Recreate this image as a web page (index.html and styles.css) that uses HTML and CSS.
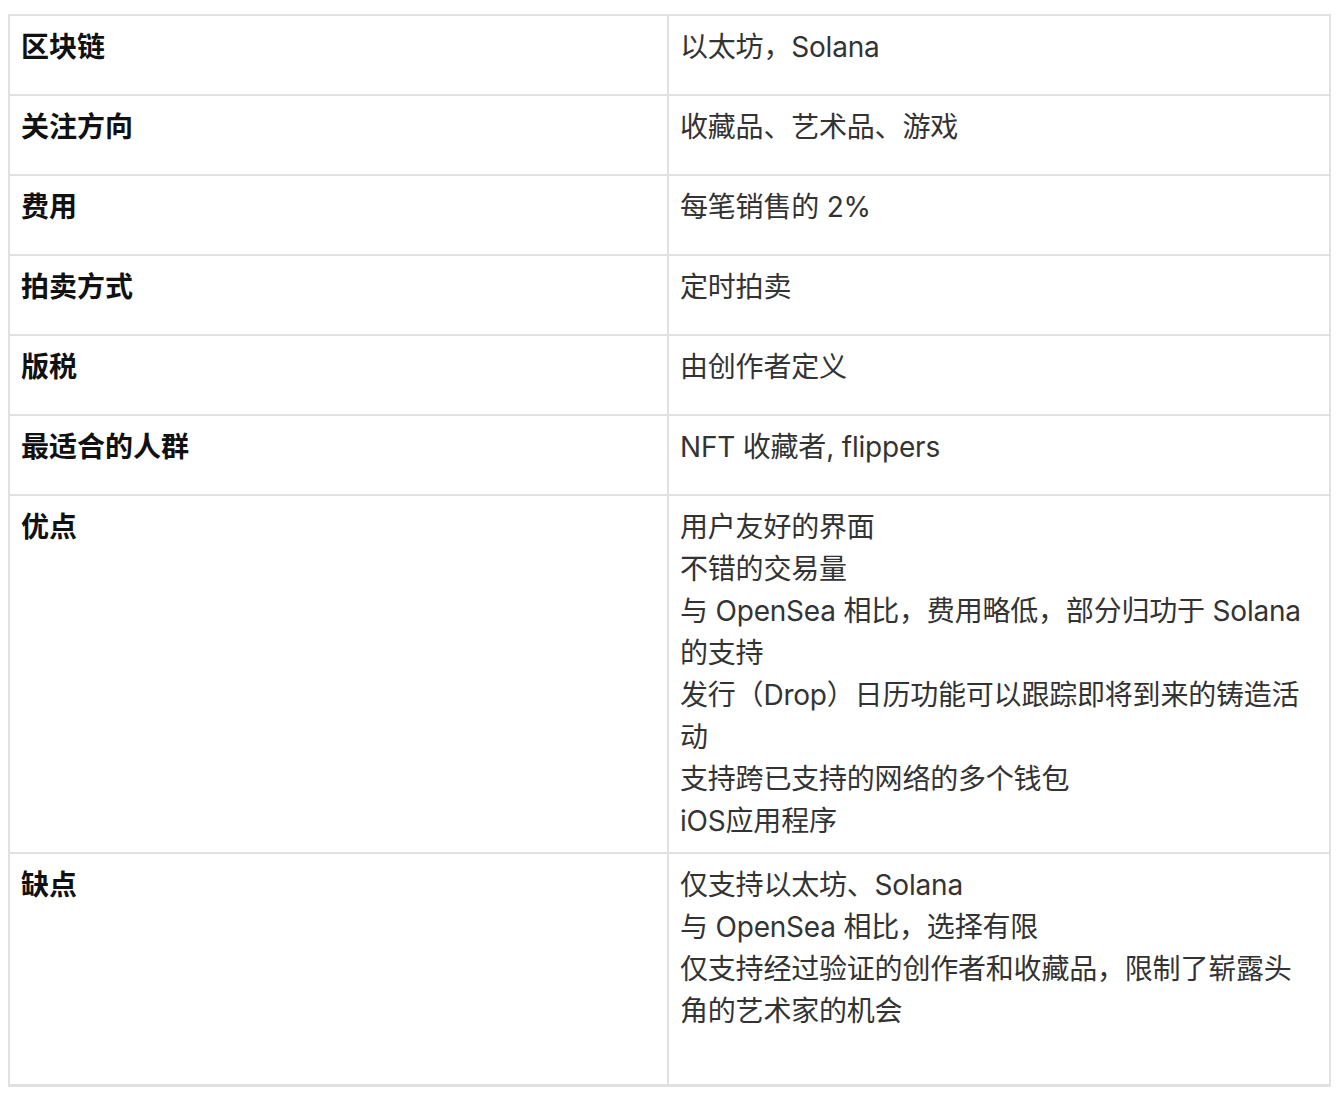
FILE: index.html
```html
<!DOCTYPE html>
<html lang="zh-CN">
<head>
<meta charset="utf-8">
<title>NFT 市场</title>
<link rel="stylesheet" href="styles.css">
</head>
<body>
<table class="info">
  <colgroup><col class="c1"><col class="c2"></colgroup>
  <tr><td class="k">区块链</td><td class="v">以太坊，Solana</td></tr>
  <tr><td class="k">关注方向</td><td class="v">收藏品、艺术品、游戏</td></tr>
  <tr><td class="k">费用</td><td class="v">每笔销售的 2%</td></tr>
  <tr><td class="k">拍卖方式</td><td class="v">定时拍卖</td></tr>
  <tr><td class="k">版税</td><td class="v">由创作者定义</td></tr>
  <tr><td class="k">最适合的人群</td><td class="v">NFT 收藏者, flippers</td></tr>
  <tr><td class="k">优点</td><td class="v">
    <div>用户友好的界面</div>
    <div>不错的交易量</div>
    <div>与 OpenSea 相比，费用略低，部分归功于 Solana 的支持</div>
    <div>发行（Drop）日历功能可以跟踪即将到来的铸造活动</div>
    <div>支持跨已支持的网络的多个钱包</div>
    <div>iOS应用程序</div>
  </td></tr>
  <tr class="last"><td class="k">缺点</td><td class="v">
    <div>仅支持以太坊、Solana</div>
    <div>与 OpenSea 相比，选择有限</div>
    <div>仅支持经过验证的创作者和收藏品，限制了崭露头角的艺术家的机会</div>
    <div class="blank">&nbsp;</div>
  </td></tr>
</table>
</body>
</html>
```
FILE: styles.css
```css
html, body {
  margin: 0;
  background: #ffffff;
}
body {
  padding: 14px 7px 8px 8px;
  font-family: "Inter", "Noto Sans CJK SC", sans-serif;
  font-size: 28px;
  line-height: 42px;
  color: #333333;
}
.info {
  width: 1323px;
  border-collapse: collapse;
  table-layout: fixed;
  border: 2px solid #e1e1e1;
  border-bottom-width: 3px;
}
.c1 { width: 659px; }
.info td {
  border: 2px solid #e1e1e1;
  padding: 10px 12px 10px 11px;
  height: 58px;
  vertical-align: top;
}
.info tr.last td {
  border-bottom-width: 3px;
}
.k {
  font-weight: 700;
  color: #111111;
}
.v {
  color: #333333;
  letter-spacing: -0.2px;
}
```
